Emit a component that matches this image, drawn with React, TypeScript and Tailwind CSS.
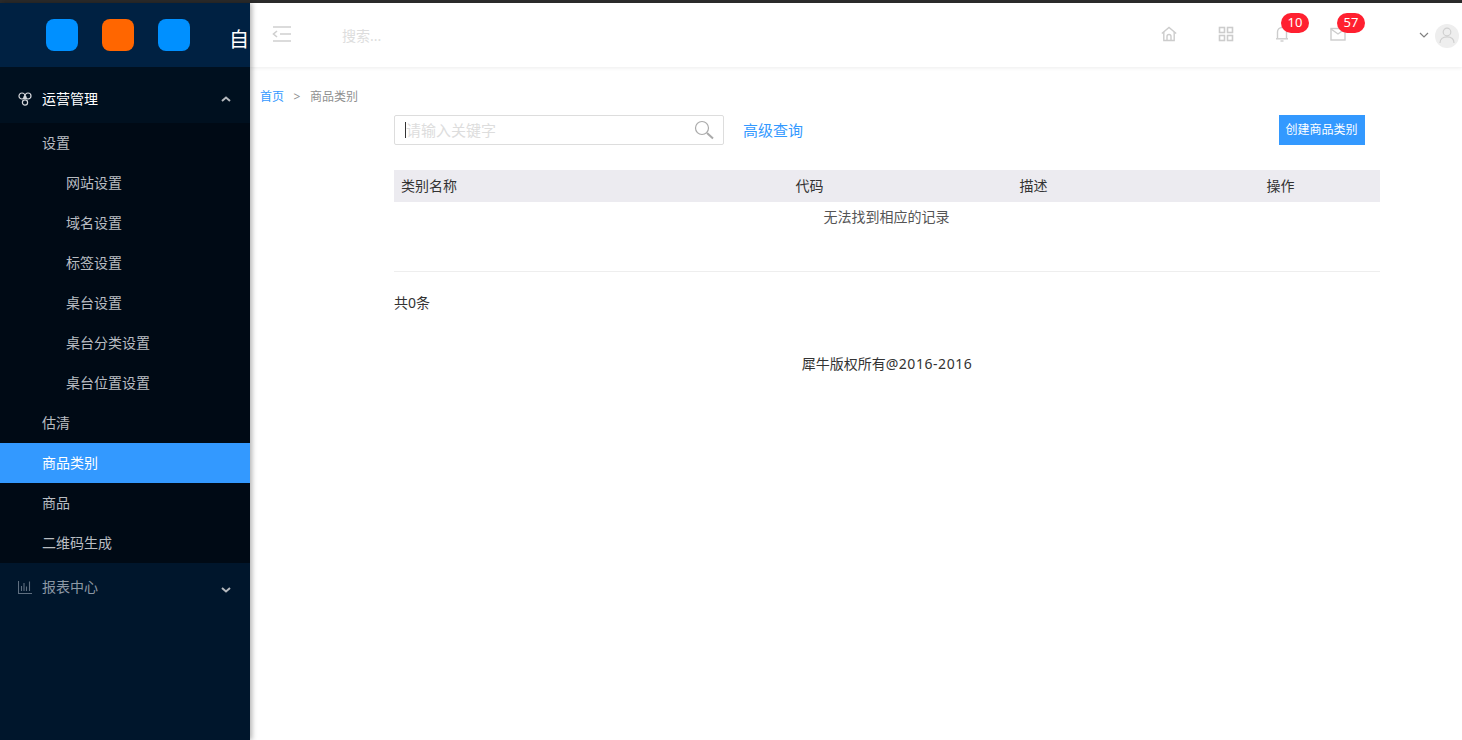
const font = { fontFamily: '"Noto Sans", "Noto Sans CJK SC", sans-serif' };

function SubRow({ label, indent, active }: { label: string; indent?: boolean; active?: boolean }) {
  return (
    <div
      className={`flex h-10 items-center pb-[2px] text-[14px] ${indent ? "pl-[66px]" : "pl-[42px]"} ${
        active ? "bg-[#3399ff] text-white" : "text-[#b9bdc2]"
      }`}
    >
      {label}
    </div>
  );
}

function Chevron({ up }: { up?: boolean }) {
  return (
    <svg width="10" height="6" viewBox="0 0 10 6" fill="none" stroke="#b4b8bd" strokeWidth="2" className={up ? "" : "mt-[6px]"}>
      <path d={up ? "M1 5l4-3.5L9 5" : "M1 1l4 3.5L9 1"} />
    </svg>
  );
}

function Sidebar() {
  return (
    <aside className="relative z-20 flex w-[250px] shrink-0 flex-col bg-[#00162c] shadow-[2px_0_5px_rgba(0,0,0,0.3)]">
      <div className="flex h-[64px] items-start gap-6 overflow-hidden bg-[#002142] pl-[46px] pt-4">
        <div className="h-8 w-8 shrink-0 rounded-lg bg-[#0090ff]" />
        <div className="h-8 w-8 shrink-0 rounded-lg bg-[#ff6600]" />
        <div className="h-8 w-8 shrink-0 rounded-lg bg-[#0090ff]" />
        <div className="ml-[15px] shrink-0 whitespace-nowrap text-[20px] leading-[42px] text-white">自</div>
      </div>
      <div className="bg-[#00101f] pt-2">
        <div className="flex h-12 items-center pl-[18px] pr-[19px] text-[14px] text-white">
          <svg width="14" height="14" viewBox="0 0 14 14" fill="none" stroke="#d5d8dc" strokeWidth="1.2" className="mr-[10px] -mt-[1px]">
            <circle cx="4" cy="4" r="3" />
            <circle cx="10" cy="4" r="3" />
            <circle cx="7" cy="10.5" r="2.6" />
            <circle cx="7" cy="5.5" r="1.2" />
          </svg>
          <span className="flex-1 pb-[2px]">运营管理</span>
          <Chevron up />
        </div>
      </div>
      <div className="bg-[#000a15]">
        <SubRow label="设置" />
        <SubRow label="网站设置" indent />
        <SubRow label="域名设置" indent />
        <SubRow label="标签设置" indent />
        <SubRow label="桌台设置" indent />
        <SubRow label="桌台分类设置" indent />
        <SubRow label="桌台位置设置" indent />
        <SubRow label="估清" />
        <SubRow label="商品类别" active />
        <SubRow label="商品" />
        <SubRow label="二维码生成" />
      </div>
      <div className="flex h-12 items-center pl-[18px] pr-[19px] text-[14px] text-[#8c98a5]">
        <svg width="14" height="14" viewBox="0 0 14 14" fill="none" stroke="#5f6f80" strokeWidth="1.1" className="mr-[10px]">
          <path d="M.5 1v12.5H14" />
          <path d="M3.5 11V6M6 11V3M8.5 11V6.5M11.5 11V1.5" />
        </svg>
        <span className="flex-1 pb-[2px]">报表中心</span>
        <Chevron />
      </div>
    </aside>
  );
}

function Badge({ n }: { n: number }) {
  return (
    <span className="absolute left-[7px] top-[-13px] flex h-5 w-7 items-center justify-center rounded-[10px] bg-[#ff2030] text-[13px] leading-none text-white">
      {n}
    </span>
  );
}

function Header() {
  return (
    <header className="relative z-10 flex h-[64px] shrink-0 items-center bg-white pl-[22px] shadow-[0_1px_4px_rgba(0,0,0,0.08)]">
      <svg width="20" height="16" viewBox="0 0 20 16" fill="none" stroke="#cfcfcf" strokeWidth="1.6" className="-mt-[3px]">
        <path d="M1 1h18M8 8h11M1 15h18" />
        <path d="M5 5 1.5 8 5 11" />
      </svg>
      <span className="ml-[50px] flex-1 text-[14px] text-[#dddddd]">搜索...</span>
      <div className="-mt-[3px] flex items-center text-[#cccccc]">
        <svg width="16" height="16" viewBox="0 0 16 16" fill="none" stroke="currentColor" strokeWidth="1.4" className="-ml-[2px]">
          <path d="M.8 7.5 8 1.5l7.2 6" />
          <path d="M2.8 6V14.5H13.2V6" />
          <path d="M6 14.5V10.5a2 2 0 0 1 4 0v4" />
        </svg>
        <svg width="16" height="16" viewBox="0 0 16 16" fill="none" stroke="currentColor" strokeWidth="1.6" className="ml-[41px]">
          <rect x="1.5" y="1.5" width="5" height="5" />
          <rect x="9.5" y="1.5" width="5" height="5" />
          <rect x="1.5" y="9.5" width="5" height="5" />
          <rect x="9.5" y="9.5" width="5" height="5" />
        </svg>
        <div className="relative ml-10 h-4 w-4">
          <svg width="16" height="16" viewBox="0 0 16 16" fill="none" stroke="currentColor" strokeWidth="1.4">
            <path d="M3.5 12.5V6a4.5 4.5 0 0 1 9 0v6.5" />
            <path d="M2 12.8h12" />
            <path d="M6.5 15h3" />
          </svg>
          <Badge n={10} />
        </div>
        <div className="relative ml-10 h-4 w-4">
          <svg width="16" height="16" viewBox="0 0 16 16" fill="none" stroke="currentColor" strokeWidth="1.4">
            <rect x="1" y="2.5" width="14" height="11.5" />
            <path d="M1 3l7 5 7-5" />
          </svg>
          <Badge n={57} />
        </div>
        <svg width="10" height="6" viewBox="0 0 10 6" fill="none" stroke="#808080" strokeWidth="1.2" className="ml-[73px] mt-[2px]">
          <path d="M1 1l4 4 4-4" />
        </svg>
        <div className="ml-[6px] mr-[3px] mt-[4px] flex h-6 w-6 items-center justify-center rounded-full bg-[#eeeeee]">
          <svg width="16" height="17" viewBox="0 0 16 17" fill="none" stroke="#d0d0d0" strokeWidth="1.2">
            <circle cx="8" cy="5" r="3.8" />
            <path d="M1 16c0-4 3-6.2 7-6.2s7 2.2 7 6.2" />
          </svg>
        </div>
      </div>
    </header>
  );
}

function Content() {
  return (
    <main className="flex-1 bg-white">
      <div className="mt-[19px] flex h-[22px] items-center gap-[9.5px] pl-[10px] text-[12px] text-[#8f8f8f]">
        <span className="text-[#3399ff]">首页</span>
        <span>&gt;</span>
        <span>商品类别</span>
      </div>
      <div className="ml-[144px] mr-[82px] mt-[7px]">
        <div className="flex items-center">
          <div className="flex h-[30px] w-[330px] items-center rounded-[2px] border border-[#dddddd] pl-[10px] pr-[9px]">
            <span className="h-[16px] w-px bg-[#333333]" />
            <span className="flex-1 text-[15px] text-[#dddddd]">请输入关键字</span>
            <svg width="20" height="20" viewBox="0 0 20 20" fill="none" stroke="#aaaaaa">
              <circle cx="8" cy="8" r="6.5" strokeWidth="1.2" />
              <path d="M13 13l6 5.5" strokeWidth="2" />
            </svg>
          </div>
          <span className="ml-[19px] flex-1 text-[15px] text-[#3399ff]">高级查询</span>
          <button className="mr-[15px] flex h-[30px] w-[86px] items-center justify-center bg-[#3399ff] pr-[1px] text-[12px] text-white">
            创建商品类别
          </button>
        </div>
        <div className="mt-[25px] grid h-8 grid-cols-[401.5px_224px_247px_1fr] items-center bg-[#ecebf0] pb-[2px] text-[14px] text-[#333333]">
          <span className="pl-[7px]">类别名称</span>
          <span>代码</span>
          <span>描述</span>
          <span>操作</span>
        </div>
        <div className="flex h-[70px] justify-center border-b border-[#eeeeee] pr-[1px] pt-[5px] text-[14px] leading-[20px] text-[#555555]">
          无法找到相应的记录
        </div>
        <div className="mt-[21px] text-[14px] leading-[20px] text-[#333333]">共0条</div>
        <div className="mt-[41px] text-center text-[14px] leading-[20px] text-[#333333]">
          犀牛版权所有<span className="tracking-[0.55px]">@2016-2016</span>
        </div>
      </div>
    </main>
  );
}

export default function App() {
  return (
    <div className="flex h-[740px] w-[1462px] flex-col overflow-hidden bg-white" style={font}>
      <div className="h-[3px] shrink-0 bg-[#2b2b2b]" />
      <div className="flex min-h-0 flex-1">
        <Sidebar />
        <div className="flex min-w-0 flex-1 flex-col">
          <Header />
          <Content />
        </div>
      </div>
    </div>
  );
}
